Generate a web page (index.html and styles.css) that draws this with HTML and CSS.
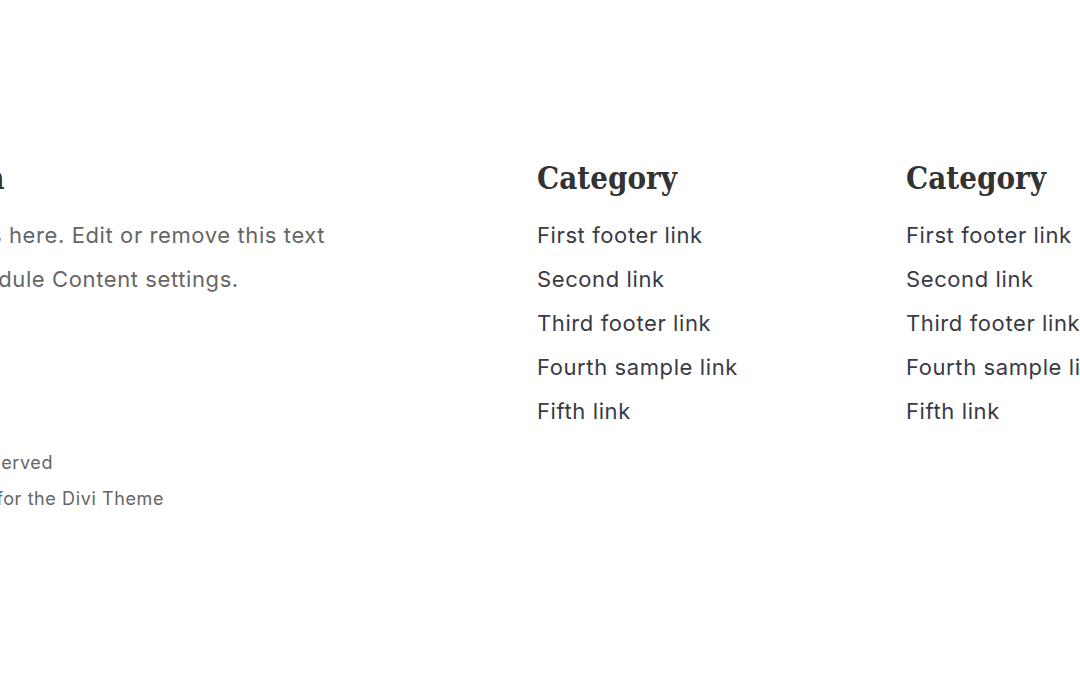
FILE: index.html
```html
<!DOCTYPE html>
<html lang="en">
<head>
  <meta charset="UTF-8" />
  <title>Footer</title>
  <link rel="stylesheet" href="styles.css">
</head>
<body>

  <!-- Footer section -->
  <footer class="site-footer">
    <div class="footer-row">

      <!-- About column -->
      <div class="footer-col about-col">
        <h3>Our Location</h3>
        <p class="about-text">Your content goes here. Edit or remove this text inline or in the module Content settings.</p>
        <div class="copyright">
          <p>© 2024 All Rights Reserved</p>
          <p>Website Layout Pack for the Divi Theme</p>
        </div>
      </div>

      <!-- Link columns -->
      <div class="footer-col">
        <h3>Category</h3>
        <ul class="footer-links">
          <li><a href="#">First footer link</a></li>
          <li><a href="#">Second link</a></li>
          <li><a href="#">Third footer link</a></li>
          <li><a href="#">Fourth sample link</a></li>
          <li><a href="#">Fifth link</a></li>
        </ul>
      </div>

      <div class="footer-col">
        <h3>Category</h3>
        <ul class="footer-links">
          <li><a href="#">First footer link</a></li>
          <li><a href="#">Second link</a></li>
          <li><a href="#">Third footer link</a></li>
          <li><a href="#">Fourth sample link</a></li>
          <li><a href="#">Fifth link</a></li>
        </ul>
      </div>

    </div>
  </footer>

</body>
</html>
```

FILE: styles.css
```css
* {
  margin: 0;
  padding: 0;
  box-sizing: border-box;
}

html, body {
  overflow: hidden;
}

body {
  font-family: "Inter", "Noto Sans", sans-serif;
  letter-spacing: 0.6px;
  background-color: #ffffff;
  color: #333;
  width: 1080px;
  height: 675px;
}

/* Footer */
.site-footer {
  padding-top: 158px;
}

.footer-row {
  display: grid;
  grid-template-columns: 690px 329px 329px;
  column-gap: 40px;
  margin-left: -193px;
  width: 1500px;
}

.footer-col h3 {
  font-family: "DejaVu Serif", serif;
  font-stretch: condensed;
  font-weight: 700;
  font-size: 31px;
  line-height: 40px;
  letter-spacing: 0;
  color: #333;
  margin-bottom: 15px;
}

.about-col {
  margin-left: -5px;
}

.about-col h3 {
  white-space: nowrap;
  letter-spacing: -0.2px;
}

.about-text {
  max-width: 540px;
  font-size: 22px;
  line-height: 44px;
  color: #666;
}

.copyright {
  margin-top: 144px;
  white-space: nowrap;
}

.copyright p {
  font-size: 18px;
  line-height: 36px;
  color: #666;
}

/* Links */
.footer-links {
  list-style: none;
}

.footer-links li {
  font-size: 22px;
  line-height: 44px;
}

.footer-links a {
  color: #3a3a45;
  text-decoration: none;
}
```
